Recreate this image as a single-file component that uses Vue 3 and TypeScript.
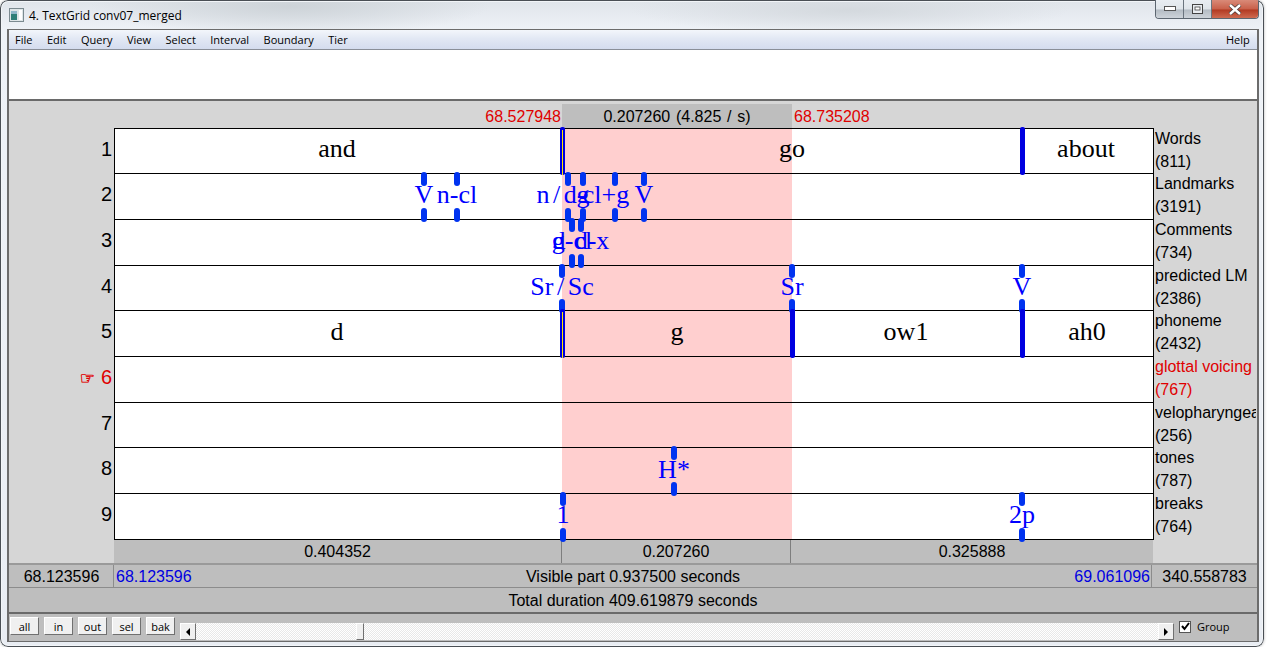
<script setup lang="ts">
// x values are measured from the left edge of the tier area
interface Label { x: number; text: string; spaced?: boolean }
interface Tier {
  name: string;
  count: number;
  active?: boolean;
  points?: number[];
  bounds?: { x: number; selected?: boolean }[];
  labels: Label[];
  dark?: boolean;
}

const tiers: Tier[] = [
  {
    name: 'Words', count: 811, dark: true,
    bounds: [{ x: 448, selected: true }, { x: 908 }],
    labels: [{ x: 223, text: 'and' }, { x: 678, text: 'go' }, { x: 972, text: 'about' }],
  },
  {
    name: 'Landmarks', count: 3191,
    points: [310, 343, 454, 469, 501, 530],
    labels: [
      { x: 310, text: 'V' }, { x: 343, text: 'n-cl' }, { x: 447, text: 'n / d-', spaced: true },
      { x: 469, text: 'g' }, { x: 492, text: 'cl+g' }, { x: 530, text: 'V' },
    ],
  },
  {
    name: 'Comments', count: 734,
    points: [458, 467],
    labels: [{ x: 458, text: 'g-cl' }, { x: 445, text: 'd' }, { x: 478, text: 'd-x' }],
  },
  {
    name: 'predicted LM', count: 2386,
    points: [448, 678, 908],
    labels: [{ x: 448, text: 'Sr / Sc', spaced: true }, { x: 678, text: 'Sr' }, { x: 908, text: 'V' }],
  },
  {
    name: 'phoneme', count: 2432, dark: true,
    bounds: [{ x: 448, selected: true }, { x: 678 }, { x: 908 }],
    labels: [{ x: 223, text: 'd' }, { x: 563, text: 'g' }, { x: 792, text: 'ow1' }, { x: 973, text: 'ah0' }],
  },
  { name: 'glottal voicing', count: 767, active: true, labels: [] },
  { name: 'velopharyngeal', count: 256, labels: [] },
  { name: 'tones', count: 787, points: [560], labels: [{ x: 560, text: 'H*' }] },
  {
    name: 'breaks', count: 764,
    points: [449, 908],
    labels: [{ x: 449, text: '1' }, { x: 908, text: '2p' }],
  },
];

const menus = ['File', 'Edit', 'Query', 'View', 'Select', 'Interval', 'Boundary', 'Tier'];
const buttons = ['all', 'in', 'out', 'sel', 'bak'];
</script>

<template>
  <div class="window">
    <div class="titlebar">
      <svg class="app-icon" width="15" height="14" viewBox="0 0 15 14">
        <rect x="0.5" y="0.5" width="14" height="13" fill="#dfe6e8" stroke="#7b8a90" />
        <rect x="2" y="3" width="6" height="9" fill="#2f7f78" />
        <rect x="2" y="3" width="6" height="3" fill="#8fb7c9" />
        <rect x="10" y="2" width="3" height="10" fill="#ffffff" />
      </svg>
      <span class="title">4. TextGrid conv07_merged</span>
      <div class="controls">
        <div class="ctl">
          <svg width="12" height="6" viewBox="0 0 12 6"><rect x="0.5" y="0.5" width="11" height="4" fill="#fff" stroke="#555" /></svg>
        </div>
        <div class="ctl">
          <svg width="11" height="10" viewBox="0 0 11 10"><rect x="0.5" y="0.5" width="10" height="9" fill="#e8ecf0" stroke="#444" /><rect x="3" y="3" width="5" height="3" fill="#fff" stroke="#444" stroke-width="0.8" /></svg>
        </div>
        <div class="ctl close">
          <svg width="14" height="11" viewBox="0 0 14 11"><path d="M2 1 L12 10 M12 1 L2 10" stroke="#4a3a38" stroke-width="4" /><path d="M2 1 L12 10 M12 1 L2 10" stroke="#fff" stroke-width="2.4" /></svg>
        </div>
      </div>
    </div>

    <div class="client">
      <nav class="menubar">
        <span v-for="m in menus" :key="m" class="menu">{{ m }}</span>
        <span class="menu help">Help</span>
      </nav>
      <div class="textfield"></div>

      <div class="editor">
        <div class="sel-row">
          <div class="sel-time left">68.527948</div>
          <div class="sel-length">0.207260 (4.825 / s)</div>
          <div class="sel-time">68.735208</div>
        </div>

        <div class="tier-area">
          <div class="numbers">
            <div v-for="(t, i) in tiers" :key="t.name" class="number" :class="{ active: t.active }">
              <span v-if="t.active" class="hand">☞</span>{{ i + 1 }}
            </div>
          </div>

          <div class="tracks">
            <div class="selection"></div>
            <div v-for="t in tiers" :key="t.name" class="track">
              <div
                v-for="b in t.bounds"
                :key="b.x"
                class="bound"
                :class="{ selected: b.selected }"
                :style="{ left: b.x + 'px' }"
              ></div>
              <template v-for="p in t.points" :key="p">
                <div class="mark top" :style="{ left: p + 'px' }"></div>
                <div class="mark bottom" :style="{ left: p + 'px' }"></div>
              </template>
              <span
                v-for="l in t.labels"
                :key="l.text + l.x"
                class="label"
                :class="{ dark: t.dark, spaced: l.spaced }"
                :style="{ left: l.x + 'px' }"
              >{{ l.text }}</span>
            </div>
          </div>

          <div class="names">
            <div v-for="t in tiers" :key="t.name" class="name" :class="{ active: t.active }">
              <div>{{ t.name }}</div>
              <div>({{ t.count }})</div>
            </div>
          </div>
        </div>

        <div class="durations">
          <div class="dur first">0.404352</div>
          <div class="dur mid">0.207260</div>
          <div class="dur last">0.325888</div>
        </div>

        <div class="visible-row">
          <div class="side">68.123596</div>
          <div class="visible">
            <span class="blue">68.123596</span>
            <span>Visible part 0.937500 seconds</span>
            <span class="blue">69.061096</span>
          </div>
          <div class="side">340.558783</div>
        </div>
        <div class="total">Total duration 409.619879 seconds</div>
      </div>

      <div class="footer">
        <button v-for="b in buttons" :key="b" class="zoom-btn">{{ b }}</button>
        <div class="scrollbar">
          <div class="arrow"><svg width="4" height="8" viewBox="0 0 4 8"><path d="M4 0 L0 4 L4 8 Z" fill="#000" /></svg></div>
          <div class="trough"><div class="thumb"></div></div>
          <div class="arrow"><svg width="4" height="8" viewBox="0 0 4 8"><path d="M0 0 L4 4 L0 8 Z" fill="#000" /></svg></div>
        </div>
        <label class="group">
          <span class="check"><svg width="9" height="9" viewBox="0 0 9 9"><path d="M1 4 L3.5 7 L8 1" fill="none" stroke="#000" stroke-width="2" /></svg></span>
          Group
        </label>
      </div>
    </div>
  </div>
</template>

<style scoped>
.window {
  width: 1264px;
  height: 647px;
  box-sizing: border-box;
  display: flex;
  flex-direction: column;
  padding: 0 5px 5px 7px;
  border-radius: 8px;
  background:
    radial-gradient(ellipse 200px 30px at 290px 6px, #cdd3d8, transparent),
    radial-gradient(ellipse 220px 24px at 850px 10px, #d4d9de, transparent),
    linear-gradient(#dfe4ea, #eef2f7 30px, #e9edf3);
  box-shadow: inset 0 0 0 1px #4a4f55, inset 0 0 0 2px #f2f5f8, 0 0 3px rgba(0, 0, 0, 0.3);
  overflow: hidden;
}
.titlebar {
  height: 29px;
  flex: none;
  display: flex;
  align-items: flex-start;
  font-family: "Open Sans", sans-serif;
  font-size: 12px;
  color: #000;
}
.app-icon { margin: 8px 5px 0 2px; }
.title { margin-top: 7px; }
.controls {
  margin-left: auto;
  display: flex;
  height: 19px;
  border: 1px solid #5c6670;
  border-top: none;
  border-radius: 0 0 4px 4px;
  overflow: hidden;
  box-sizing: border-box;
}
.ctl {
  width: 27px;
  display: flex;
  align-items: center;
  justify-content: center;
  background: linear-gradient(#e8edf2, #dfe5ea 50%, #b4bcc4 55%, #cdd3d9);
  border-right: 1px solid #6a747e;
}
.close {
  width: 46px;
  border-right: none;
  background: linear-gradient(#d98a78, #c9604a 50%, #b23a22 55%, #cf6a50);
}

.client {
  flex: 1;
  min-height: 0;
  display: flex;
  flex-direction: column;
  border: 1px solid #6c6c6c;
  border-width: 1px 2px 1px 2px;
  background: #bebebe;
}
.menubar {
  height: 20px;
  flex: none;
  box-sizing: border-box;
  display: flex;
  align-items: center;
  background: linear-gradient(#f3f6fb, #e2e8f4 45%, #d4dcee);
  border-bottom: 1px solid #8a8f98;
  font-family: "Open Sans", sans-serif;
  font-size: 11px;
  color: #000;
}
.menu { padding: 0 7.3px 0 7.2px; }
.menu:first-child { padding-left: 6px; }
.help { margin-left: auto; }
.textfield {
  height: 49px;
  flex: none;
  background: #fff;
  border-bottom: 2px solid #6a6a6a;
}

.editor {
  flex: none;
  height: 513px;
  display: flex;
  flex-direction: column;
  background: #d6d6d6;
  font-family: "Liberation Sans", Arial, sans-serif;
  font-size: 16px;
  color: #000;
}
.sel-row {
  flex: none;
  height: 27px;
  box-sizing: border-box;
  padding: 3px 0 0 105px;
  display: grid;
  grid-template-columns: 448px 230px 361px;
  line-height: 25px;
}
.sel-time { color: #e00000; padding-left: 2px; }
.sel-time.left { text-align: right; padding: 0 1px 0 0; }
.sel-length { background: #bebebe; text-align: center; word-spacing: 1.3px; }

.tier-area {
  flex: none;
  height: 412px;
  display: grid;
  grid-template-columns: 105px 1040px 1fr;
}
.numbers, .names, .tracks {
  display: grid;
  grid-template-rows: 45px 46px 46px 45px 46px 46px 45px 46px 46px;
}
.number {
  display: flex;
  align-items: center;
  justify-content: flex-end;
  padding: 0 2px 3px 0;
  font-size: 20px;
}
.number.active { color: #e00000; }
.hand {
  font-family: "DejaVu Sans", sans-serif;
  font-size: 17px;
  margin-right: 6px;
  -webkit-text-stroke: 0.4px #e00000;
}
.tracks {
  position: relative;
  background: #fff;
  border-left: 1px solid #000;
  border-right: 1px solid #000;
  border-bottom: 1px solid #000;
  box-sizing: border-box;
}
.selection {
  position: absolute;
  left: 447px;
  width: 230px;
  top: 0;
  bottom: 0;
  background: #ffcfcf;
}
.track {
  position: relative;
  border-top: 1px solid #000;
}
/* tiers 4 and 8: their labels sit a pixel lower */
.track:nth-child(5) .label,
.track:nth-child(9) .label { margin-top: 1px; }
.bound {
  position: absolute;
  top: -2px;
  bottom: -2px;
  width: 5px;
  margin-left: -3px;
  background: #0000e0;
  border-radius: 2px;
  z-index: 1;
}
.bound.selected {
  background:
    linear-gradient(#0000e0 0 3px, transparent 3px),
    linear-gradient(90deg, #0000e0 0 2px, #ffe800 2px 3px, #0000e0 3px);
}
.mark {
  position: absolute;
  width: 6px;
  height: 14px;
  margin-left: -4px;
  background: #0033f0;
  border-radius: 3px;
  z-index: 1;
}
.mark.top { top: -2px; }
.mark.bottom { bottom: -3px; }
.label {
  position: absolute;
  top: 50%;
  transform: translate(calc(-50% - 1px), calc(-50% - 2px));
  font-family: "Liberation Serif", "Times New Roman", serif;
  font-size: 26px;
  line-height: 30px;
  color: #0000ff;
  white-space: nowrap;
  z-index: 2;
}
.label.dark { color: #000; }
.label.spaced { word-spacing: -3px; }
.name {
  padding: 0 0 0 1px;
  margin-top: -1px;
  line-height: 23px;
  white-space: nowrap;
  overflow: hidden;
  margin-right: 1px;
}
.name.active { color: #e00000; }

.durations {
  flex: none;
  height: 23px;
  margin: 0 104px 0 105px;
  display: grid;
  grid-template-columns: 447px 230px 1fr;
  background: #bebebe;
  line-height: 24px;
  text-align: center;
}
.dur.mid { border-left: 1px solid #7e7e7e; border-right: 1px solid #7e7e7e; }
.visible-row {
  flex: none;
  height: 24px;
  display: grid;
  grid-template-columns: 105px 1fr 105px;
  background: #bebebe;
  border-top: 2px solid #9a9a9a;
  box-sizing: border-box;
  line-height: 23px;
}
.side { text-align: center; }
.visible {
  display: flex;
  justify-content: space-between;
  padding: 0 1px 0 2px;
  border-left: 1px solid #8c8c8c;
  border-right: 1px solid #8c8c8c;
  margin-left: -1px;
}
.blue { color: #0000e0; }
.total {
  flex: none;
  height: 27px;
  box-sizing: border-box;
  text-align: center;
  line-height: 26px;
  background: #bebebe;
  border-top: 1px solid #8c8c8c;
  border-bottom: 2px solid #6a6a6a;
}

.footer {
  flex: 1;
  min-height: 0;
  display: flex;
  align-items: flex-start;
  padding: 3px 0 0 1px;
  gap: 5px;
  background: #bebebe;
  font-family: "Open Sans", sans-serif;
  font-size: 11px;
  color: #000;
}
.zoom-btn {
  width: 29px;
  height: 18px;
  padding: 0;
  font: inherit;
  background: #f0f0f0;
  border: 1px solid;
  border-color: #fff #707070 #707070 #fff;
}
.scrollbar {
  display: flex;
  align-items: stretch;
  width: 994px;
  height: 17px;
  margin-top: 6px;
}
.arrow {
  width: 16px;
  flex: none;
  display: flex;
  align-items: center;
  justify-content: center;
  background: #f0f0f0;
  border: 1px solid;
  border-color: #fff #707070 #707070 #fff;
  box-sizing: border-box;
}
.trough {
  flex: 1;
  position: relative;
  background: repeating-conic-gradient(#fff 0 25%, #e8e8e8 0 50%) 0 0 / 2px 2px;
}
.thumb {
  position: absolute;
  left: 160px;
  width: 8px;
  top: 0;
  bottom: 0;
  box-sizing: border-box;
  background: #f0f0f0;
  border: 1px solid;
  border-color: #fff #707070 #707070 #fff;
}
.group {
  display: flex;
  align-items: center;
  gap: 6px;
  margin: 2px 0 0 0;
}
.check {
  width: 12px;
  height: 12px;
  box-sizing: border-box;
  background: #fff;
  border: 1px solid #555;
  display: flex;
  align-items: center;
  justify-content: center;
}
</style>

<style>
html, body { margin: 0; background: #fff; }
</style>
